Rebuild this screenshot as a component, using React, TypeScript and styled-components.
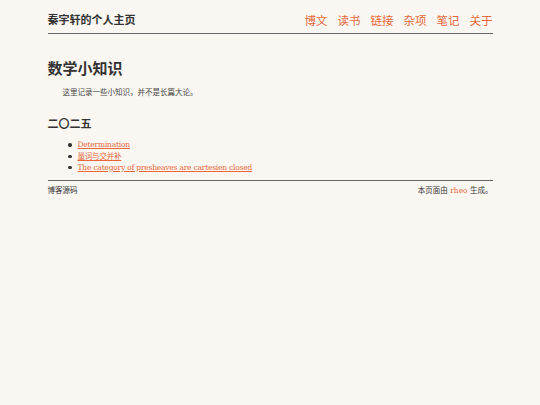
import React from "react";
import styled, { createGlobalStyle } from "styled-components";

const serif = `"DejaVu Serif", "Liberation Serif", "Noto Sans CJK SC", serif`;

const Global = createGlobalStyle`
  html, body {
    margin: 0;
    padding: 0;
    background: #faf7f2;
  }
  body {
    font-family: ${serif};
    color: #333;
  }
`;

const Page = styled.div`
  width: 445px;
  margin: 0 auto;
  font-size: 7.5px;
  line-height: 1.5;
`;

const Header = styled.header`
  display: flex;
  justify-content: space-between;
  align-items: flex-end;
  padding-top: 13px;
  padding-bottom: 4px;
  border-bottom: 1.5px solid #666;
`;

const SiteTitle = styled.a`
  font-size: 11px;
  font-weight: 700;
  color: #333;
  text-decoration: none;
  line-height: 16px;
`;

const Nav = styled.nav`
  display: flex;
  gap: 10px;
`;

const NavLink = styled.a`
  font-size: 11.5px;
  color: #e8673a;
  text-decoration: none;
  line-height: 16px;
`;

const Title = styled.h1`
  font-size: 15px;
  font-weight: 700;
  margin: 25px 0 8px;
  line-height: 20px;
`;

const Intro = styled.p`
  margin: 0;
  text-indent: 2em;
  color: #444;
`;

const Year = styled.h2`
  font-size: 11px;
  font-weight: 700;
  margin: 19px 0 6px;
  line-height: 16px;
`;

const List = styled.ul`
  margin: 0;
  padding-left: 30px;
  list-style: none;
`;

const Item = styled.li`
  position: relative;
  line-height: 11.3px;
  color: #333;

  &::before {
    content: "";
    position: absolute;
    left: -9.5px;
    top: 4px;
    width: 3.5px;
    height: 3.5px;
    border-radius: 50%;
    background: #333;
  }
`;

const Link = styled.a`
  color: #e8673a;
  text-decoration: underline;
  letter-spacing: -0.2px;
`;

const Footer = styled.footer`
  display: flex;
  justify-content: space-between;
  margin-top: 7px;
  padding-top: 4px;
  border-top: 1.5px solid #666;
  color: #333;
`;

const Accent = styled.span`
  color: #e8673a;
`;

const navItems = ["博文", "读书", "链接", "杂项", "笔记", "关于"];
const notes = [
  "Determination",
  "量词与交并补",
  "The category of presheaves are cartesien closed",
];

export default function App() {
  return (
    <>
      <Global />
      <Page>
        <Header>
          <SiteTitle href="#">秦宇轩的个人主页</SiteTitle>
          <Nav>
            {navItems.map((n) => (
              <NavLink key={n} href="#">
                {n}
              </NavLink>
            ))}
          </Nav>
        </Header>
        <Title>数学小知识</Title>
        <Intro>这里记录一些小知识，并不是长篇大论。</Intro>
        <Year>二〇二五</Year>
        <List>
          {notes.map((n) => (
            <Item key={n}>
              <Link href="#">{n}</Link>
            </Item>
          ))}
        </List>
        <Footer>
          <span>博客源码</span>
          <span>
            本页面由 <Accent>rheo</Accent> 生成。
          </span>
        </Footer>
      </Page>
    </>
  );
}
